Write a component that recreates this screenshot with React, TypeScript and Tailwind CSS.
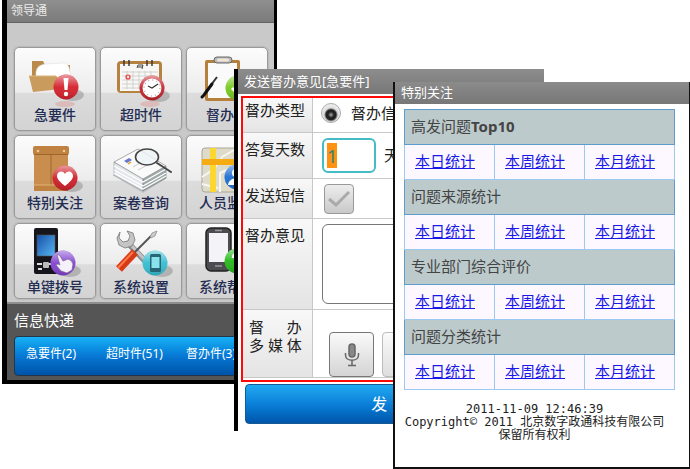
import { Fragment, type ReactNode } from "react";

interface MenuItem {
  label: string;
  icon: ReactNode;
}

function Badge({ cx, cy, color, children }: { cx: number; cy: number; color: string; children?: ReactNode }) {
  return (
    <g>
      <ellipse cx={cx + 7} cy={cy + 8} rx="11" ry="6" fill="#000" opacity="0.18" />
      <circle cx={cx} cy={cy} r="12.5" fill={color} />
      <circle cx={cx} cy={cy} r="12.5" fill="url(#shine)" />
      {children}
    </g>
  );
}

const menu: MenuItem[] = [
  {
    label: "急要件",
    icon: (
      <>
        <path d="M18 14h11l2 4h25v24H18z" fill="#b98a4b" />
        <path d="M22 25q1-7 9-8l20-1q4 1 5 9v12H22z" fill="#fff" stroke="#ddd" strokeWidth="0.5" />
        <path d="M15 29h27l3 3h11v9l-37 4z" fill="#c99b5c" />
        <path d="M15 29h27l3 3h11" fill="none" stroke="#dcb77f" />
        <Badge cx={52} cy={40} color="#d4202c">
          <path d="M49.5 31h5l-1 12h-3z" fill="#fff" />
          <circle cx="52" cy="47" r="2.2" fill="#fff" />
        </Badge>
        <ellipse cx="51" cy="57" rx="10" ry="3" fill="#e08080" opacity="0.35" />
      </>
    ),
  },
  {
    label: "超时件",
    icon: (
      <>
        <rect x="17" y="14" width="45" height="32" rx="4" fill="#b5823f" />
        <path d="M20 17h39v21l-6 6H20z" fill="#f7f7f5" />
        <path d="M22 25h36M22 29h36M22 33h36M22 37h30M22 41h30M27 24v18M33 24v18M39 24v18M45 24v18M51 24v8" stroke="#c9c9c9" strokeWidth="0.8" />
        <path d="M24 13v6M29 13v6M47 13v6M52 13v6" stroke="#333" strokeWidth="1.4" />
        <path d="M37 21l1-3h5l-1 4M38 20h4" stroke="#444" fill="none" />
        <circle cx="28" cy="30" r="2" fill="none" stroke="#e33" strokeWidth="1.2" />
        <Badge cx={52} cy={41} color="#c2242c">
          <circle cx="52" cy="41" r="9.5" fill="#fff" />
          <circle cx="52" cy="41" r="8" fill="none" stroke="#888" strokeWidth="1" strokeDasharray="1 3.2" />
          <path d="M58 37l-6 4-4-2" fill="none" stroke="#333" strokeWidth="1.1" />
        </Badge>
        <ellipse cx="50" cy="57" rx="10" ry="3" fill="#e08080" opacity="0.35" />
      </>
    ),
  },
  {
    label: "督办件",
    icon: (
      <>
        <rect x="19" y="13" width="35" height="41" rx="2" fill="#b5803c" />
        <path d="M22 16h29v35H22z" fill="#fafafa" />
        <rect x="28" y="10" width="18" height="6" rx="3" fill="#bbb" stroke="#666" />
        <rect x="31" y="11.5" width="12" height="3" rx="1.5" fill="#f0e6d5" />
        <path d="M31 30L19 46" stroke="#333" strokeWidth="2" />
        <path d="M26 37l-8 11-2 2" stroke="#111" strokeWidth="3" strokeLinecap="round" />
        <Badge cx={52} cy={41} color="#76c81c">
          <path d="M46 41l5 5 8-10" fill="none" stroke="#fff" strokeWidth="3" />
        </Badge>
      </>
    ),
  },
  {
    label: "特别关注",
    icon: (
      <>
        <rect x="20" y="13" width="34" height="40" fill="#c98d4d" />
        <rect x="19" y="11" width="36" height="9" rx="2" fill="#c08240" />
        <path d="M20 19.500h34M37 20v30" stroke="#94602a" strokeWidth="0.8" />
        <path d="M20 50h34v6H20z" fill="#c08240" />
        <path d="M20 50h34" stroke="#e2b27a" />
        <circle cx="24" cy="16" r="1.300" fill="#eccb96" />
        <circle cx="50" cy="16" r="1.300" fill="#eccb96" />
        <Badge cx={51} cy={43} color="#cf1f2a">
          <path d="M51 51c-5-4-8-7-8-10 0-5 6-6 8-2 2-4 8-3 8 2 0 3-3 6-8 10z" fill="#fff" />
        </Badge>
      </>
    ),
  },
  {
    label: "案卷查询",
    icon: (
      <>
        <path d="M12 40l31 18 24-15-4-3z" fill="#bbb" opacity="0.7" />
        <path d="M14 27v13l29 16V43z" fill="#e4e7ea" stroke="#8b9095" strokeWidth="0.6" />
        <path d="M43 43v13l23-13V31z" fill="#9fa8a8" stroke="#70787c" strokeWidth="0.6" />
        <path d="M14 31l29 16 23-13M14 35l29 16 23-13M14 38l29 16 23-13" fill="none" stroke="#fff" strokeWidth="1.2" />
        <path d="M14 27l24-13 28 17-23 13z" fill="#fafafa" stroke="#888" strokeWidth="0.7" />
        <path d="M24 26l5-3 3 2-5 3z" fill="#6a78c8" />
        <path d="M28 29l3-2" stroke="#d9a520" strokeWidth="1.5" />
        <path d="M33 32l12-7M38 35l13-7" stroke="#ccc" />
        <path d="M57 28l14 9" stroke="#444" strokeWidth="2" strokeLinecap="round" />
        <ellipse cx="47" cy="22" rx="11.500" ry="8" fill="#eef5f8" fillOpacity="0.8" stroke="#444" strokeWidth="1.6" />
      </>
    ),
  },
  {
    label: "人员监控",
    icon: (
      <>
        <rect x="16" y="13" width="46" height="44" rx="3" fill="#dedbca" stroke="#aaa699" />
        <path d="M16 42l12-8 8-12 14-8M34 57V38l14-6M16 49l16 4" stroke="#f7f6f0" fill="none" strokeWidth="2" />
        <path d="M24 13h6v44h-6z" fill="#fbd72f" />
        <path d="M16 24h46v6H16z" fill="#f5ac12" />
        <Badge cx={51} cy={42} color="#1c6ed2">
          <circle cx="50" cy="38" r="4" fill="#fff" />
          <path d="M42 50c1-9 15-9 16 0z" fill="#fff" />
        </Badge>
      </>
    ),
  },
  {
    label: "单键拨号",
    icon: (
      <>
        <rect x="20" y="5" width="24" height="46" rx="2" fill="#15151b" />
        <rect x="23" y="12" width="18" height="21" fill="url(#screen)" stroke="#555" strokeWidth="0.6" />
        <path d="M23 40h5v2h-5zM35 40h5v2h-5zM24 45h4v2h-4z" fill="#ddd" />
        <rect x="29" y="39" width="6" height="6" rx="1" fill="#bbb" />
        <Badge cx={49} cy={40} color="#8243d0">
          <path d="M43 32q2-1 3 1l3 5 5-2q4 1 5 5l-1 6-5 3-6-2-5-6q2-2 4 0z" fill="#f5f0fa" stroke="#776090" strokeWidth="0.7" />
        </Badge>
      </>
    ),
  },
  {
    label: "系统设置",
    icon: (
      <>
        <path d="M27 19l20 21" stroke="#8d8d8d" strokeWidth="6" />
        <path d="M27 18l20 21" stroke="#c4c4c4" strokeWidth="3" />
        <path d="M20 9l-3 6 2 7 6 3 7-2 3-6-2-7-6-2 3 5-2 5-5 1-4-4z" fill="#c5c5c5" stroke="#777" strokeWidth="0.8" />
        <path d="M34 30L51 13" stroke="#555" strokeWidth="2" />
        <path d="M50 14l2-4 5-2-2 5-4 2z" fill="#ccc" stroke="#777" strokeWidth="0.6" />
        <path d="M35 29L19 46" stroke="#d93a16" strokeWidth="8" />
        <path d="M33 29L18 45" stroke="#ff7a4a" strokeWidth="2" />
        <Badge cx={55} cy={40} color="#35bdd0">
          <rect x="50" y="31" width="11" height="18" rx="1.500" fill="#286675" />
          <rect x="51.500" y="34" width="8" height="11" fill="#8ae2ee" />
        </Badge>
      </>
    ),
  },
  {
    label: "系统帮助",
    icon: (
      <>
        <rect x="20" y="5" width="25" height="43" rx="5" fill="#4b4b50" stroke="#222" strokeWidth="1.5" />
        <rect x="23" y="10" width="19" height="29" fill="#f4f4f8" />
        <path d="M29 7.500h7M29 43h7" stroke="#999" strokeWidth="1.5" />
        <Badge cx={51} cy={38} color="#26b81a">
          <path d="M47 35q0-4 4-4t4 4q0 2-4 4v2" fill="none" stroke="#fff" strokeWidth="2.5" />
          <circle cx="51" cy="45" r="1.500" fill="#fff" />
        </Badge>
      </>
    ),
  },
];

const express = ["急要件(2)", "超时件(51)", "督办件(3)"];

const reports: ReactNode[] = [
  <>高发问题<b>Top10</b></>,
  "问题来源统计",
  "专业部门综合评价",
  "问题分类统计",
];

const periods = ["本日统计", "本周统计", "本月统计"];

function HomeWindow() {
  return (
    <section className="absolute top-0 left-[2px] w-[275px] border-b-4 border-l-[5px] border-r-[3px] border-black bg-[#c9c9c9]">
      <h1 className="h-[23px] border-b border-[#626262] bg-linear-to-b from-[#8f8f8f] to-[#7b7b7b] pl-1 text-xs leading-[21px] text-[#ececec]">
        领导通
      </h1>
      <nav className="grid grid-cols-[82px_82px_82px] grid-rows-[84px_84px_76px] gap-1 px-[7px] pt-6 pb-[3px] [&>button:nth-child(n+7)>svg]:-mb-2">
        {menu.map((item) => (
          <button
            key={item.label}
            type="button"
            className="flex flex-col items-center justify-start overflow-hidden rounded-[5px] border border-[#9a9a9a] bg-[linear-gradient(#fcfcfc,#ececec_54%,#dcdcdc_55%,#d3d3d3)] text-sm leading-5 font-medium text-[#232c52] shadow-[0_0_1px_1px_#bababa]"
          >
            <svg viewBox="0 0 82 62" className="-mt-px -mb-1 h-[62px] w-[82px] shrink-0" aria-hidden="true">
              {item.icon}
            </svg>
            {item.label}
          </button>
        ))}
      </nav>
      <div className="border-t-2 border-[#8e8e8e] bg-[#555] pb-1 pl-[7px]">
        <h2 className="h-8 text-[15px] leading-8 text-white">信息快递</h2>
        <div className="grid h-10 grid-cols-[80px_80px_1fr] items-center rounded-l border border-[#253548] bg-linear-to-b from-[#18b1f6] via-[#0878d4] to-[#0053a8] pb-1 pl-[11px] text-xs text-white">
          {express.map((text) => (
            <button key={text} type="button" className="text-left">
              {text}
            </button>
          ))}
        </div>
      </div>
    </section>
  );
}

const labelCell = "border-r border-b border-[#c8c8c8] bg-linear-to-b from-[#f8f8f8] to-[#e4e4e4] pl-[2px] leading-6";
const fieldCell = "flex border-b border-[#c8c8c8] bg-white";

function OpinionWindow() {
  return (
    <section className="absolute top-[69px] left-[234px] w-[310px] border-l-4 border-black bg-white pb-[7px]">
      <h1 className="h-[25px] bg-linear-to-b from-[#8d8d8d] to-[#777] pl-[6px] text-[13px] leading-6 text-white">
        发送督办意见[急要件]
      </h1>
      <form className="pt-[2px] pl-[3px]" onSubmit={(e) => e.preventDefault()}>
        <div className="grid grid-cols-[70px_1fr] grid-rows-[35px_46px_40px_91px_68px] border-2 border-[#ff0808] pb-[2px] text-[15px] text-[#222]">
          <span className={labelCell}>督办类型</span>
          <label className={`${fieldCell} items-center gap-[10px] pb-1 pl-[8px]`}>
            <input
              type="radio"
              defaultChecked
              className="size-5 appearance-none rounded-full border border-[#aaa] bg-[radial-gradient(circle_at_50%_60%,#aaa_0,#222_3px,#222_5px,#888_6px,#ddd_7px,#eee_10px)]"
            />
            督办信息
          </label>
          <label htmlFor="days" className={`${labelCell} pt-1`}>答复天数</label>
          <div className={`${fieldCell} items-center gap-2 pl-[9px]`}>
            <input
              id="days"
              defaultValue="1"
              className="h-[35px] w-[54px] rounded-md border-2 border-[#45bcc5] bg-white bg-[linear-gradient(#ff9311,#ff9311)] bg-[length:10px_25px] bg-[position:3px_3px] bg-no-repeat pl-[3px] text-lg text-[#31847a]"
            />
            <span>天</span>
          </div>
          <label htmlFor="sms" className={`${labelCell} pt-1`}>发送短信</label>
          <div className={`${fieldCell} items-center pl-[11px]`}>
            <span className="grid">
              <input
                id="sms"
                type="checkbox"
                className="col-start-1 row-start-1 size-[30px] appearance-none rounded border border-[#999] bg-linear-to-b from-[#ededed] to-[#c9c9c9]"
              />
              <svg viewBox="0 0 30 30" className="pointer-events-none col-start-1 row-start-1 size-[30px]" aria-hidden="true">
                <path d="M5 15l7 6 13-13" fill="none" stroke="#aaa" strokeWidth="3" />
              </svg>
            </span>
          </div>
          <label htmlFor="opinion" className={`${labelCell} pt-1`}>督办意见</label>
          <div className={`${fieldCell} py-[5px] pr-2 pl-[9px]`}>
            <textarea id="opinion" className="w-full resize-none rounded-md border border-[#777]" />
          </div>
          <div className={`${labelCell} pt-2 pl-[6px] whitespace-pre`}>
            <p className="leading-[18px]">督　  办</p>
            <p className="leading-[18px]">多 媒 体</p>
          </div>
          <div className={`${fieldCell} items-end gap-2 pl-4`}>
            <button
              type="button"
              aria-label="录音"
              className="grid size-[45px] place-items-center rounded border border-[#777] bg-linear-to-b from-[#fafafa] to-[#d4d4d4]"
            >
              <svg viewBox="0 0 16 24" className="h-6 w-4" fill="none" stroke="#666" strokeWidth="1.5" aria-hidden="true">
                <rect x="5" y="1" width="6" height="13" rx="3" fill="#888" />
                <path d="M1.500 10v2c0 7 13 7 13 0v-2M8 17v5M4 22.500h8" />
              </svg>
            </button>
            <button type="button" aria-label="拍照" className="size-[45px] rounded border border-[#bbb] bg-linear-to-b from-[#fafafa] to-[#dedede]" />
          </div>
        </div>
        <button
          type="submit"
          className="mt-[2px] ml-1 h-10 w-[293px] rounded border border-[#165a93] bg-linear-to-b from-[#22a9f2] via-[#0b80d8] to-[#0056ab] text-base whitespace-pre text-white"
        >
          发  送
        </button>
      </form>
    </section>
  );
}

function FocusWindow() {
  return (
    <section className="absolute top-[82px] right-0 left-[393px] border-r border-b-2 border-l-2 border-[#111] bg-white pb-[25px]">
      <h1 className="h-[22px] bg-linear-to-b from-[#8b8b8b] to-[#777] pl-[6px] text-[13px] leading-5 text-white">特别关注</h1>
      <div className="pt-[5px] pr-[14px] pl-[9px]">
        <table className="w-full table-fixed border-collapse border border-[#75b1de] text-[15px] leading-5">
          <tbody>
            {reports.map((title, i) => (
              <Fragment key={i}>
                <tr className="h-[35px] bg-[#bdcacc]">
                  <th colSpan={3} className="border border-[#5d9dcd] p-0 pb-[2px] pl-[6px] text-left font-normal text-[#444]">
                    {title}
                  </th>
                </tr>
                <tr className="h-[35px] bg-[#fdf7ff]">
                  {periods.map((period) => (
                    <td key={period} className="border border-[#9bc9ef] p-0 pb-[2px] pl-[10px]">
                      <a href="#" className="text-[#1818e8] underline">
                        {period}
                      </a>
                    </td>
                  ))}
                </tr>
              </Fragment>
            ))}
          </tbody>
        </table>
      </div>
      <footer className="pt-[13px] pr-6 pl-[9px] text-center font-['DejaVu_Sans_Mono','Noto_Sans_CJK_SC',monospace] text-xs leading-[13px] whitespace-nowrap text-[#222]">
        <p>2011-11-09 12:46:39</p>
        <p>Copyright© 2011 北京数字政通科技有限公司</p>
        <p>保留所有权利</p>
      </footer>
    </section>
  );
}

export default function App() {
  return (
    <main className="relative min-h-screen overflow-hidden bg-white font-['Noto_Sans','Noto_Sans_CJK_SC',sans-serif]">
      {/* Shared gradients for the menu icons */}
      <svg className="absolute size-0" aria-hidden="true">
        <defs>
          <linearGradient id="shine" x1="0" y1="0" x2="0" y2="1">
            <stop offset="0" stopColor="#fff" stopOpacity="0.55" />
            <stop offset="0.5" stopColor="#fff" stopOpacity="0.05" />
            <stop offset="1" stopColor="#000" stopOpacity="0.15" />
          </linearGradient>
          <linearGradient id="screen" x1="0" y1="0" x2="1" y2="1">
            <stop offset="0" stopColor="#1650a8" />
            <stop offset="1" stopColor="#58b6f2" />
          </linearGradient>
        </defs>
      </svg>
      <HomeWindow />
      <OpinionWindow />
      <FocusWindow />
    </main>
  );
}
